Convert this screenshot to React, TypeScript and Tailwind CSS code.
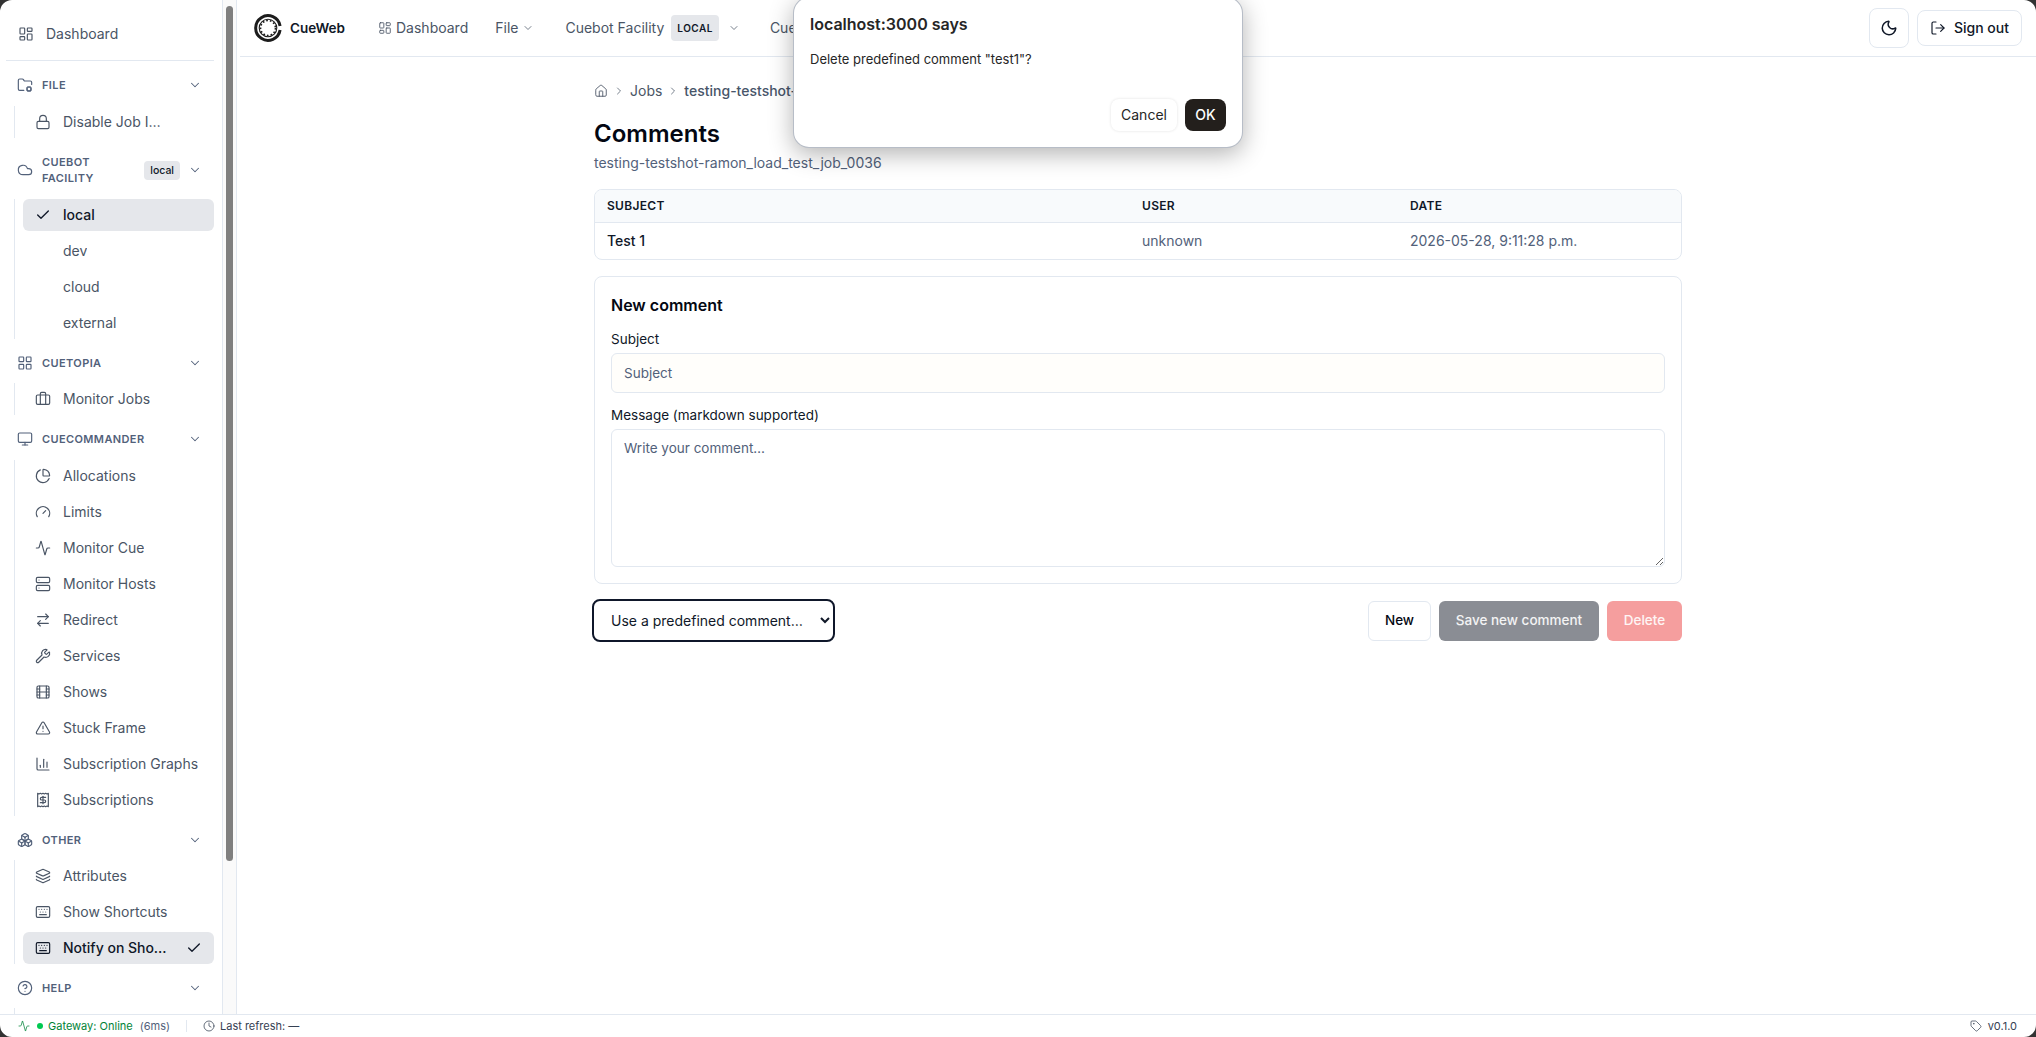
import React from 'react';
import {
  Activity,
  ArrowRightLeft,
  BarChart3,
  Boxes,
  Briefcase,
  Check,
  ChevronDown,
  ChevronRight,
  CircleHelp,
  Clock,
  Cloud,
  Film,
  FolderCog,
  Gauge,
  Home,
  Info,
  Keyboard,
  Layers,
  LayoutDashboard,
  LayoutGrid,
  Lock,
  LogOut,
  Monitor,
  Moon,
  PieChart,
  Receipt,
  Server,
  Tag,
  TriangleAlert,
  Wrench,
} from 'lucide-react';

type Item = {
  label: string;
  icon?: React.ElementType;
  active?: boolean;
  checked?: boolean;
  width?: string;
};

type Section = {
  title: string;
  icon: React.ElementType;
  badge?: string;
  listClass: string;
  items: Item[];
};

const sections: Section[] = [
  {
    title: 'FILE',
    icon: FolderCog,
    listClass: 'mt-[5px]',
    items: [{ label: 'Disable Job Interaction', icon: Lock, width: 'w-[102px]' }],
  },
  {
    title: 'CUEBOT FACILITY',
    icon: Cloud,
    badge: 'local',
    listClass: 'mt-[5px]',
    items: [{ label: 'local', icon: Check, active: true }, { label: 'dev' }, { label: 'cloud' }, { label: 'external' }],
  },
  { title: 'CUETOPIA', icon: LayoutGrid, listClass: 'mt-1', items: [{ label: 'Monitor Jobs', icon: Briefcase }] },
  {
    title: 'CUECOMMANDER',
    icon: Monitor,
    listClass: 'mt-[5px]',
    items: [
      { label: 'Allocations', icon: PieChart },
      { label: 'Limits', icon: Gauge },
      { label: 'Monitor Cue', icon: Activity },
      { label: 'Monitor Hosts', icon: Server },
      { label: 'Redirect', icon: ArrowRightLeft },
      { label: 'Services', icon: Wrench },
      { label: 'Shows', icon: Film },
      { label: 'Stuck Frame', icon: TriangleAlert },
      { label: 'Subscription Graphs', icon: BarChart3 },
      { label: 'Subscriptions', icon: Receipt },
    ],
  },
  {
    title: 'OTHER',
    icon: Boxes,
    listClass: 'mt-1',
    items: [
      { label: 'Attributes', icon: Layers },
      { label: 'Show Shortcuts', icon: Keyboard },
      { label: 'Notify on Show Completion', icon: Keyboard, active: true, checked: true, width: 'w-[108px]' },
    ],
  },
  { title: 'HELP', icon: CircleHelp, listClass: 'mt-1', items: [{ label: 'About', icon: Info }] },
];

const Logo = () => (
  <svg width="28" height="28" viewBox="0 0 28 28" fill="none" stroke="#1c1c1c">
    <path d="M26.1 12A12.3 12.3 0 1 0 26.1 16" strokeWidth="3" />
    <circle cx="14" cy="14" r="8.8" strokeWidth="1.1" />
    <circle cx="14" cy="14" r="7.5" strokeWidth="1.7" strokeDasharray="1.7 2" />
  </svg>
);

const Corner = ({ className }: { className: string }) => (
  <svg width="12" height="12" viewBox="0 0 12 12" className={`absolute z-50 ${className}`}>
    <path d="M0 0H12A12 12 0 0 0 0 12Z" fill="#333" />
  </svg>
);

const Sidebar = () => (
  <aside className="w-[223px] shrink-0 overflow-hidden border-r border-slate-200 pl-[6px] pr-2 pt-[18px]">
    <a className="flex h-8 items-center gap-3 px-3 text-sm text-gray-600">
      <LayoutDashboard size={16} strokeWidth={1.75} />
      Dashboard
    </a>
    <div className="mt-[10px] border-t border-slate-200" />
    <div className="mt-2 flex flex-col gap-2">
      {sections.map((section) => (
        <section key={section.title}>
          <div className="flex min-h-8 items-center gap-2 py-2 pl-[11px] pr-3 text-[#52617a]">
            <section.icon size={16} strokeWidth={1.75} className="mr-px shrink-0" />
            <span className="min-w-0 flex-1 text-[11px] font-semibold leading-4 tracking-[0.035em]">{section.title}</span>
            {section.badge && (
              <span className="rounded bg-gray-200 px-1.5 py-0.5 text-[10.5px] font-medium leading-[15px] text-gray-900">
                {section.badge}
              </span>
            )}
            <ChevronDown size={14} strokeWidth={1.75} className="shrink-0" />
          </div>
          <ul className={`ml-2 flex flex-col gap-1 border-l border-slate-200 pl-2 ${section.listClass}`}>
            {section.items.map((item) => (
              <li
                key={item.label}
                className={`flex h-8 items-center gap-3 rounded-md px-3 text-sm ${
                  item.active ? 'bg-gray-200 font-medium text-gray-900' : 'text-gray-600'
                }`}
              >
                {item.icon ? (
                  <item.icon size={16} strokeWidth={item.icon === Check ? 2 : 1.75} className="shrink-0" />
                ) : (
                  <span className="w-4 shrink-0" />
                )}
                <span className={`truncate ${item.width ?? ''}`}>{item.label}</span>
                {item.checked && <Check size={16} strokeWidth={2} className="ml-auto shrink-0" />}
              </li>
            ))}
          </ul>
        </section>
      ))}
    </div>
  </aside>
);

const Header = () => (
  <header className="flex h-[57px] shrink-0 items-center border-b border-slate-200 pl-[14px] pr-[14px]">
    <Logo />
    <span className="ml-2 text-[13.5px] font-semibold text-gray-900">CueWeb</span>
    <nav className="ml-[33px] flex items-center text-sm text-gray-600">
      <a className="flex items-center gap-1">
        <LayoutDashboard size={14} strokeWidth={1.5} />
        Dashboard
      </a>
      <a className="ml-[27px] flex items-center gap-1">
        File
        <ChevronDown size={12} strokeWidth={1.5} />
      </a>
      <a className="ml-[31px] flex items-center gap-[7px]">
        Cuebot Facility
        <span className="flex h-[26px] items-center rounded bg-gray-200 px-1.5 text-[10px] font-semibold tracking-wider text-gray-900">
          LOCAL
        </span>
        <ChevronDown size={12} strokeWidth={1.5} className="ml-[2px]" />
      </a>
      <a className="ml-[30px]">Cuetopia</a>
    </nav>
    <button className="ml-auto flex size-10 items-center justify-center rounded-lg border border-slate-200 text-gray-900">
      <Moon size={18} strokeWidth={2} />
    </button>
    <button className="ml-2 flex h-9 w-[105px] items-center justify-center gap-2 rounded-lg border border-slate-200 text-sm font-medium text-gray-900">
      <LogOut size={16} strokeWidth={1.75} />
      Sign out
    </button>
  </header>
);

const Comments = () => (
  <div className="mx-auto w-[1088px] pt-6">
    <div className="flex h-5 items-center gap-[5px] text-sm text-gray-600">
      <Home size={14} strokeWidth={1.5} />
      <ChevronRight size={12} strokeWidth={1.5} />
      <span>Jobs</span>
      <ChevronRight size={12} strokeWidth={1.5} />
      <span className="font-medium text-[#475569]">testing-testshot-ramon_load_test_job_0036</span>
    </div>
    <h1 className="mt-[17px] text-2xl font-semibold leading-8 text-gray-950">Comments</h1>
    <p className="mt-[3px] text-sm leading-5 text-[#52617a]">testing-testshot-ramon_load_test_job_0036</p>
    <div className="mt-4 overflow-hidden rounded-lg border border-slate-200">
      <table className="w-full table-fixed text-left text-sm">
        <thead className="bg-slate-50 text-xs font-semibold tracking-wide text-gray-900">
          <tr className="h-8 border-b border-slate-200">
            <th className="w-[535px] px-3 font-semibold">SUBJECT</th>
            <th className="w-[268px] px-3 font-semibold">USER</th>
            <th className="px-3 font-semibold">DATE</th>
          </tr>
        </thead>
        <tbody>
          <tr className="h-[37px]">
            <td className="px-3 font-medium text-gray-900">Test 1</td>
            <td className="px-3 text-[#52617a]">unknown</td>
            <td className="px-3 text-[#52617a]">2026-05-28, 9:11:28 p.m.</td>
          </tr>
        </tbody>
      </table>
    </div>
    <div className="mt-4 rounded-lg border border-slate-200 p-4">
      <h2 className="text-base font-semibold leading-6 text-gray-950">New comment</h2>
      <label className="mt-[12px] block text-[13.5px] leading-5 text-gray-900">Subject</label>
      <input
        placeholder="Subject"
        className="mt-[4px] block h-10 w-full rounded-md border border-slate-200 bg-[#fffefb] px-3 text-[13.5px] placeholder:text-[#52617a]"
      />
      <label className="mt-[12px] block text-[13.5px] leading-5 text-gray-900">Message (markdown supported)</label>
      <textarea
        placeholder="Write your comment…"
        className="mt-[4px] block h-[138px] w-full rounded-md border border-slate-200 px-3 py-2 text-[13.5px] placeholder:text-[#52617a]"
      />
    </div>
    <div className="mt-[15px] flex items-center">
      <select className="-ml-[2px] h-[43px] w-[243px] rounded-lg border-2 border-[#0f172a] bg-white pl-[13px] pr-1 text-sm text-gray-900">
        <option>Use a predefined comment…</option>
      </select>
      <button className="ml-auto h-10 w-[63px] rounded-md border border-slate-200 text-[13.5px] font-medium text-gray-950">New</button>
      <button className="ml-2 h-10 w-[160px] rounded-md bg-[#8a8d94] text-[13.5px] font-medium text-white/90">Save new comment</button>
      <button className="ml-2 h-10 w-[75px] rounded-md bg-[#f59e9e] text-[13.5px] font-medium text-white/90">Delete</button>
    </div>
  </div>
);

const StatusBar = () => (
  <footer className="flex h-[23px] shrink-0 items-center border-t border-slate-200 pl-[18px] pr-[19px] text-[11px] text-gray-700">
    <Activity size={12} strokeWidth={1.5} className="text-green-700" />
    <span className="ml-[7px] size-[6px] rounded-full bg-green-500" />
    <span className="ml-[5px] text-green-700">Gateway: Online</span>
    <span className="ml-[7px] text-[#52617a]">(6ms)</span>
    <span className="ml-4 h-3 border-l border-slate-200" />
    <Clock size={12} strokeWidth={1.5} className="ml-4" />
    <span className="ml-[5px]">Last refresh: —</span>
    <Tag size={12} strokeWidth={1.5} className="ml-auto" />
    <span className="ml-[6px]">v0.1.0</span>
  </footer>
);

export default function App() {
  return (
    <div className="relative flex h-screen flex-col overflow-hidden bg-white font-['Inter',sans-serif]">
      <div className="flex min-h-0 flex-1">
        <Sidebar />
        <div className="flex w-[14px] shrink-0 justify-center border-r border-slate-200 bg-[#fafafa] pt-[6px]">
          <div className="h-[855px] w-[7px] rounded-full bg-[#7f7f7f]" />
        </div>
        <main className="min-w-0 flex-1 pl-[3px]">
          <Header />
          <Comments />
        </main>
      </div>
      <StatusBar />

      {/* browser confirm dialog */}
      <div className="absolute -top-[3px] left-[793px] z-40 h-[151px] w-[450px] rounded-2xl border border-gray-400/70 bg-white shadow-[0_6px_24px_rgba(0,0,0,0.3)]">
        <p className="absolute left-4 top-[14px] text-base font-semibold leading-6 text-[#262626]">localhost:3000 says</p>
        <p className="absolute left-4 top-[51px] text-[13px] leading-5 text-[#262626]">Delete predefined comment "test1"?</p>
        <div className="absolute bottom-4 right-4 flex gap-2">
          <button className="h-8 w-[66px] rounded-lg text-sm text-[#262626] shadow-[0_0_3px_rgba(0,0,0,0.12)]">Cancel</button>
          <button className="h-8 w-[41px] rounded-lg bg-[#231f1c] text-sm font-medium text-white">OK</button>
        </div>
      </div>

      <Corner className="left-0 top-0" />
      <Corner className="right-0 top-0 rotate-90" />
      <Corner className="bottom-0 right-0 rotate-180" />
      <Corner className="bottom-0 left-0 -rotate-90" />
    </div>
  );
}
